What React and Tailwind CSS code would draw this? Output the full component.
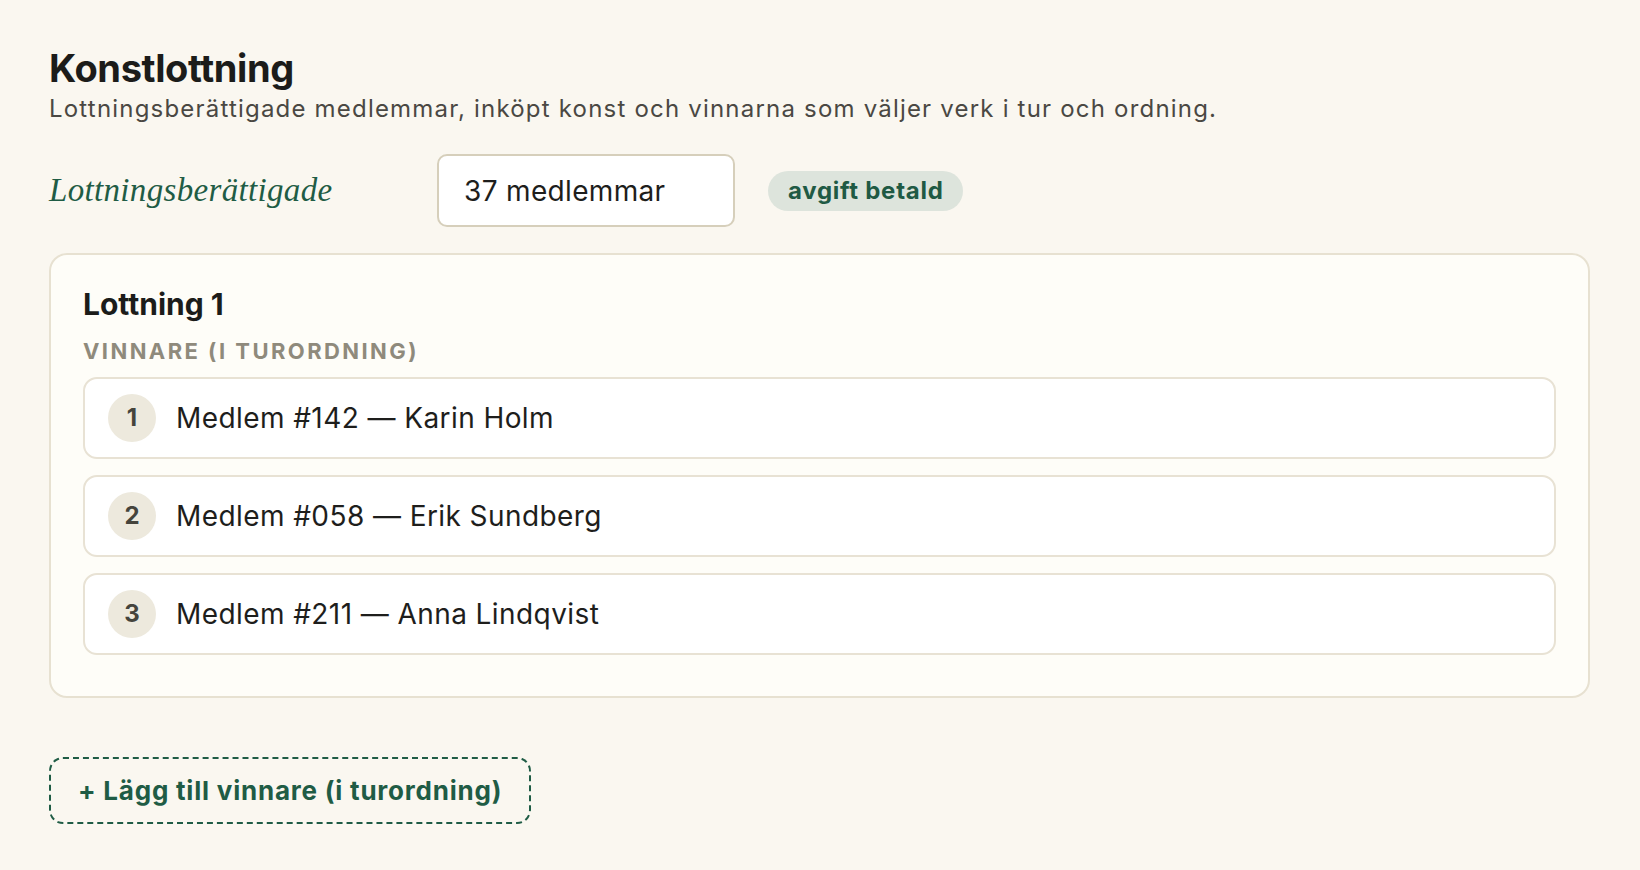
const winners = [
	{ place: 1, label: "Medlem #142 — Karin Holm" },
	{ place: 2, label: "Medlem #058 — Erik Sundberg" },
	{ place: 3, label: "Medlem #211 — Anna Lindqvist" },
];

const WinnerRow = ({ place, label }) => (
	<li className="flex h-[82px] items-center gap-[20px] rounded-[14px] border-2 border-[#e8e2d4] bg-white pl-[23px]">
		<span className="flex h-12 w-12 items-center justify-center rounded-full bg-[#ede9dd] text-[24px] font-bold text-[#45443c]">
			{place}
		</span>
		<span className="text-[28px] tracking-[0.015em] text-[#1e1e1c]">{label}</span>
	</li>
);

export default function App() {
	return (
		<div
			className="min-h-screen bg-[#faf7f0] pb-10 pl-[49px] pr-[50px] pt-[45px]"
			style={{ fontFamily: "Inter, 'Noto Sans', sans-serif" }}
		>
			{/* Rubrik */}
			<h1 className="text-[38px] font-bold leading-[46px] tracking-[-0.01em] text-[#1c1c1a]">
				Konstlottning
			</h1>
			<p className="mt-[2px] text-[24px] leading-[32px] tracking-[0.05em] text-[#4a4843]">
				Lottningsberättigade medlemmar, inköpt konst och vinnarna som väljer verk i tur och ordning.
			</p>

			{/* Antal lottningsberättigade */}
			<div className="mt-[29px] flex items-center">
				<span
					className="w-[388px] text-[33px] italic tracking-[0.01em] text-[#1f5c45]"
					style={{ fontFamily: "'Liberation Serif', 'DejaVu Serif', serif" }}
				>
					Lottningsberättigade
				</span>
				<div className="flex h-[73px] w-[298px] items-center rounded-[10px] border-2 border-[#d6cfbb] bg-white px-[25px] text-[28px] tracking-[0.012em] text-[#1e1e1c]">
					37 medlemmar
				</div>
				<span className="ml-[33px] flex h-[40px] items-center rounded-full bg-[#dde4dc] px-[20px] text-[24px] font-bold tracking-[0.03em] text-[#1f5a44]">
					avgift betald
				</span>
			</div>

			{/* Lottning */}
			<section className="mt-[26px] rounded-[18px] border-2 border-[#e7e1d1] bg-[#fefdf8] px-[32px] pb-[41px] pt-[31px]">
				<h2 className="text-[30px] font-bold leading-[36px] text-[#1c1c1a]">Lottning 1</h2>
				<p className="mt-[15px] text-[22px] font-bold uppercase leading-[28px] tracking-[0.11em] text-[#8f8a7c]">
					Vinnare (i turordning)
				</p>
				<ul className="mt-[12px] flex flex-col gap-4">
					{winners.map((w) => (
						<WinnerRow key={w.place} {...w} />
					))}
				</ul>
			</section>

			<button className="mt-[59px] flex h-[67px] items-center rounded-[14px] border-2 border-dashed border-[#1f5c45] px-[27px] text-[26px] font-bold tracking-[0.03em] text-[#1f5c45]">
				+ Lägg till vinnare (i turordning)
			</button>
		</div>
	);
}
